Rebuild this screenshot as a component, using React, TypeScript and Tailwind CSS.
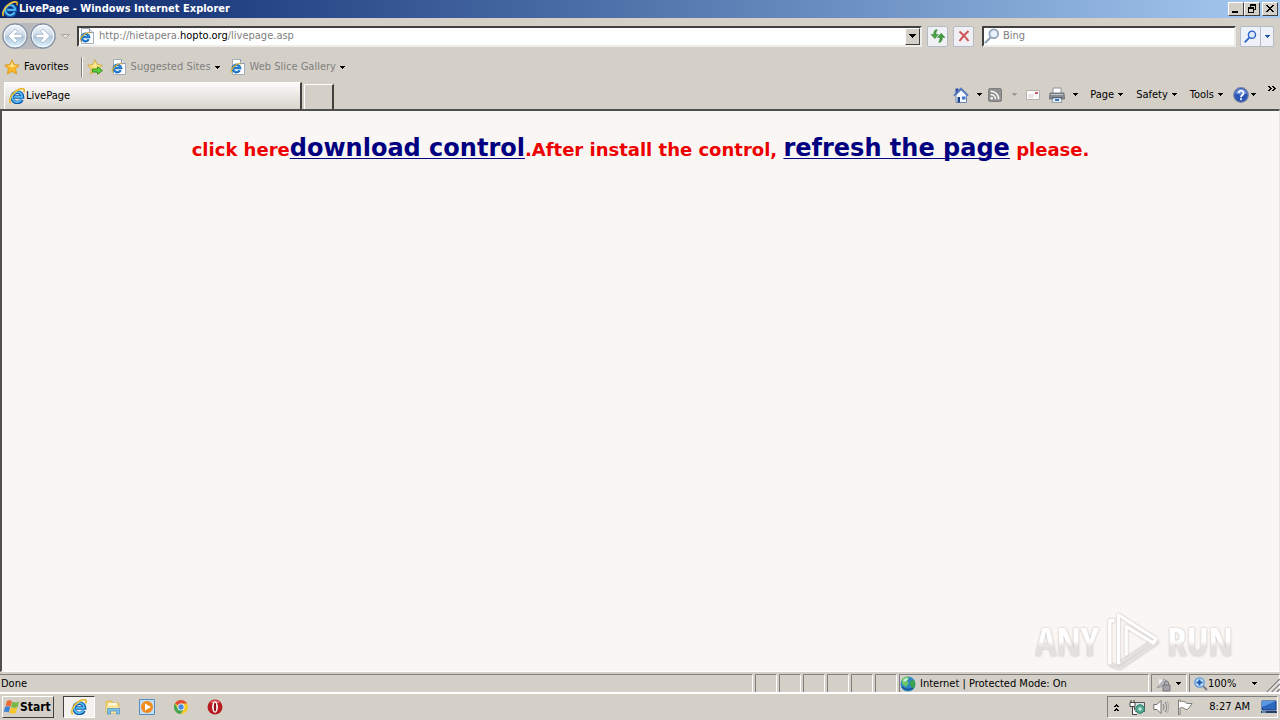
import React from "react";

const ui = "font-['Tahoma','DejaVu_Sans_Condensed','DejaVu_Sans',sans-serif]";

function Caret({ className = "text-black" }: { className?: string }) {
  return (
    <svg className={`h-[3px] w-[5px] shrink-0 ${className}`} viewBox="0 0 5 3" shapeRendering="crispEdges">
      <path d="M0 0h5v1H0zM1 1h3v1H1zM2 2h1v1H2z" fill="currentColor" />
    </svg>
  );
}

function IeGlyph({ className }: { className: string }) {
  return (
    <svg className={`shrink-0 ${className}`} viewBox="0 0 16 16" fill="none">
      <path d="M13 11.600A5.200 5.200 0 1 1 13.500 9H5.200" stroke="#1659ad" strokeWidth="3.600" />
      <path d="M12.700 11.200A5 5 0 1 1 13.200 8.900H5.200" stroke="#55c0f5" strokeWidth="1.700" />
      <path d="M1.700 15.200C-.6 13 1.600 7.400 6 3.800 10 .6 14.600-.2 15.200 1.900c.2.800 0 1.600-.4 2.400" stroke="#e3ae1c" strokeWidth="1.600" />
      <path d="M1.200 14C.3 12 2.400 7.400 6.300 4.200 10 1.300 14 .5 14.700 2" stroke="#fbe27a" strokeWidth=".7" />
    </svg>
  );
}

function PageIe() {
  return (
    <svg className="size-4 shrink-0" viewBox="0 0 16 16" fill="none">
      <path d="M2.500.5h8l4 4v11h-12z" fill="#fff" stroke="#a3adba" />
      <path d="M10.500.5v4h4" fill="#dfe6ee" stroke="#8c98a8" />
      <path d="M9.700 11.200A3.700 3.700 0 1 1 10.100 9H4" stroke="#1668c0" strokeWidth="2.400" />
      <path d="M9.300 10.900A3.500 3.500 0 1 1 9.800 8.900H4.400" stroke="#43a5e8" strokeWidth=".7" />
      <path d="M1.500 13.500c-1.200-1.700 1.200-5.400 4.300-7.500C8.400 4.300 11 3.900 11 5.500" stroke="#dcb02a" strokeWidth="1.100" />
    </svg>
  );
}

function NavArrow({ label, flip }: { label: string; flip?: boolean }) {
  return (
    <button aria-label={label} className="size-[26px]">
      <svg className="size-[26px]" viewBox="0 0 26 26">
        <defs>
          <linearGradient id={flip ? "ringB" : "ringA"} x1="0" y1="0" x2="0" y2="1">
            <stop offset="0" stopColor="#f4f7fb" />
            <stop offset=".48" stopColor="#ccd9e8" />
            <stop offset=".52" stopColor="#aec5db" />
            <stop offset="1" stopColor="#e2f6ff" />
          </linearGradient>
        </defs>
        <circle cx="13" cy="13" r="12" fill={flip ? "url(#ringB)" : "url(#ringA)"} stroke="#8492a6" strokeWidth="1.300" />
        <circle cx="13" cy="13" r="10.800" fill="none" stroke="#fff" strokeWidth="1" />
        <path
          d={flip ? "M6 11.300h7.500L10.500 8.200 13 6l7 7-7 7-2.500-2.200 3-3.100H6z" : "M20 11.300h-7.500l3-3.100L13 6l-7 7 7 7 2.500-2.200-3-3.100H20z"}
          fill="#fff"
          stroke="#a0b3c9"
          strokeWidth=".8"
        />
      </svg>
    </button>
  );
}

function Star({ add }: { add?: boolean }) {
  return (
    <svg className="size-4 shrink-0" viewBox="0 0 16 16">
      <path d="M8 .8l2.200 4.800 5.200.6-3.800 3.500 1 5.300L8 12.400 3.400 15l1-5.300L.6 6.200l5.200-.6z" fill={add ? "#f7dc6a" : "#fbb829"} stroke={add ? "#c9a53a" : "#d8921c"} strokeWidth=".8" />
      <path d="M8 2.800l1.500 3.500 3.500.4-4.600 1.500-5-1.500 3.200-.4z" fill="#fde79a" />
      {add && <path d="M5.500 10h5V7.800l5 3.700-5 3.700V13h-5z" fill="#5fce3e" stroke="#23871a" strokeWidth=".8" />}
    </svg>
  );
}

function Magnifier({ className, rim, glass }: { className: string; rim: string; glass: string }) {
  return (
    <svg className={`shrink-0 ${className}`} viewBox="0 0 16 16">
      <path d="M1.500 14.500L6.500 9.500" stroke={rim} strokeWidth="2.200" strokeLinecap="round" />
      <circle cx="9.800" cy="5.800" r="4.400" fill={glass} stroke={rim} strokeWidth="1.700" />
    </svg>
  );
}

function WinButton({ label, children }: { label: string; children: React.ReactNode }) {
  return (
    <button aria-label={label} className="h-[14px] w-4 border border-t-white border-r-[#404040] border-b-[#404040] border-l-white bg-[#d4d0c8]">
      <svg className="h-3 w-[14px]" viewBox="0 0 14 12" shapeRendering="crispEdges">
        {children}
      </svg>
    </button>
  );
}

function TitleBar() {
  return (
    <header className="flex h-[18px] items-center bg-linear-to-r from-[#0a246a] to-[#a6caf0] px-[2px] text-white">
      <IeGlyph className="mr-[1px] size-4" />
      <h1 className="grow text-[11px] font-bold">LivePage - Windows Internet Explorer</h1>
      <div className="mr-[2px] flex">
        <WinButton label="Minimize"><path d="M3 8h6v2H3z" /></WinButton>
        <WinButton label="Restore">
          <path d="M5 1h6v2H5zM5 3h1v1H5zM10 3h1v4h-1zM9 6h1v1H9zM3 4h6v2H3zM3 6h1v4H3zM8 6h1v4H8zM3 9h6v1H3z" />
        </WinButton>
      </div>
      <WinButton label="Close">
        <path d="M3 2h2v1H3zM9 2h2v1H9zM4 3h2v1H4zM8 3h2v1H8zM5 4h4v1H5zM6 5h2v1H6zM5 6h4v1H5zM4 7h2v1H4zM8 7h2v1H8zM3 8h2v1H3zM9 8h2v1H9z" />
      </WinButton>
    </header>
  );
}

function NavBar() {
  return (
    <div className="flex h-9 items-center pr-[6px] pl-[2px]">
      <nav aria-label="History" className="flex items-center gap-[2px] rounded-full bg-[#b9b9bd]">
        <NavArrow label="Back" />
        <NavArrow label="Forward" flip />
      </nav>
      <svg className="mr-[7px] ml-[5px] h-[5px] w-[9px]" viewBox="0 0 9 5"><path d="M.5.5h8l-4 4z" fill="#e6e3de" stroke="#aaa59c" /></svg>
      <div className="flex h-[21px] grow items-center border-2 border-t-[#404040] border-r-[#eeece8] border-b-[#eeece8] border-l-[#404040] bg-white">
        <PageIe />
        <a href="#address" aria-label="Address" className="ml-1 grow text-[11px] text-[#808080]">
          http://hietapera.<span className="text-black">hopto.org</span>/livepage.asp
        </a>
        <button aria-label="Show addresses" className="flex h-[17px] w-[15px] items-center justify-center border border-t-white border-r-[#404040] border-b-[#404040] border-l-white bg-[#d4d0c8]">
          <svg className="h-1 w-[7px]" viewBox="0 0 7 4" shapeRendering="crispEdges"><path d="M0 0h7v1H0zM1 1h5v1H1zM2 2h3v1H2zM3 3h1v1H3z" /></svg>
        </button>
      </div>
      <button aria-label="Refresh" className="ml-[5px] flex h-[21px] w-[21px] items-center justify-center rounded-[2px] border border-[#b4bac6] bg-[#f0f1f5]">
        <svg className="size-4" viewBox="0 0 16 16">
          <path d="M6.500 1.500C4.500 2 3.600 3.500 3.600 6.500H1l3.800 4.200L8.500 6.500H6c0-2 .2-3.500 1.500-4.500z" fill="#4aa546" stroke="#22701f" strokeWidth=".4" />
          <path d="M9 14.500c2.500-.5 3.400-2 3.400-5H15l-3.800-4.200L7.500 9.500H10c0 2-.2 3.500-1.500 4.500z" fill="#3f9a3c" stroke="#22701f" strokeWidth=".4" />
        </svg>
      </button>
      <button aria-label="Stop" className="ml-[5px] flex h-[21px] w-[21px] items-center justify-center rounded-[2px] border border-[#b4bac6] bg-[#f0eff3]">
        <svg className="size-3" viewBox="0 0 12 12"><path d="M1.500 1.500C4 3.500 8 7.500 10.500 11M10.500 1C7 4 4 7.500 1.500 11" stroke="#cf5257" strokeWidth="2.100" fill="none" /></svg>
      </button>
      <label className="ml-2 flex h-[21px] w-[254px] items-center border-2 border-t-[#404040] border-r-[#eeece8] border-b-[#eeece8] border-l-[#404040] bg-white">
        <Magnifier className="size-4" rim="#8fa3b8" glass="#e8f1f8" />
        <input aria-label="Search" placeholder="Bing" className="ml-[3px] min-w-0 grow text-[11px] placeholder:text-[#808080] focus:outline-none" />
      </label>
      <div className="ml-1 flex h-[21px] rounded-[2px] border border-[#b4bac6] bg-[#eef1f7]">
        <button aria-label="Search the web" className="flex w-5 items-center justify-center border-r border-[#b4bac6]">
          <Magnifier className="size-[13px]" rim="#2a62c8" glass="#dcebfb" />
        </button>
        <button aria-label="Search options" className="flex w-3 items-center justify-center"><Caret className="text-[#1f57a8]" /></button>
      </div>
    </div>
  );
}

function FavoritesBar() {
  return (
    <div className="flex h-7 items-center pb-[2px] pl-1 text-[11px]">
      <button className="flex items-center gap-1"><Star />Favorites</button>
      <span className="ml-3 h-5 w-[2px] border-r border-l border-r-white border-l-[#808080]" />
      <button aria-label="Add to Favorites Bar" className="ml-1"><Star add /></button>
      <button className="ml-2 flex items-center text-[#808080]">
        <PageIe /><span className="mr-1 ml-1">Suggested Sites</span><Caret />
      </button>
      <button className="ml-[10px] flex items-center text-[#808080]">
        <PageIe /><span className="mr-1 ml-1">Web Slice Gallery</span><Caret />
      </button>
    </div>
  );
}

function MenuButton({ text }: { text: string }) {
  return <button className="flex items-center gap-1">{text}<Caret /></button>;
}

function TabRow() {
  return (
    <div className="flex h-[27px] items-stretch pl-1 text-[11px]">
      <div className="flex w-[298px] items-center gap-[1px] border-t border-r-2 border-l border-t-white border-r-[#404040] border-l-white bg-linear-to-b from-[#fbfaf9] to-[#d9d5ce] pl-1">
        <IeGlyph className="size-4" /><span>LivePage</span>
      </div>
      <button aria-label="New Tab" className="mt-[2px] ml-[2px] w-[30px] border-t border-r-2 border-l border-t-white border-r-[#404040] border-l-white" />
      <span className="grow" />
      <div className="flex h-[25px] items-center pr-1">
        <button aria-label="Home" className="flex items-center gap-2">
          <svg className="size-4" viewBox="0 0 16 16">
            <path d="M2.500 1.500h3v5h-3z" fill="#28479c" />
            <path d="M3 8l5-5 5.500 5v7.500H3z" fill="#f5f9ff" stroke="#6d87b5" />
            <path d="M.8 8.700L8 1.500l7.200 7.200" fill="none" stroke="#587bc0" strokeWidth="1.700" />
            <path d="M4.500 10H7v5.500H4.500z" fill="#1d438c" /><path d="M9 9.500h3.500v3H9z" fill="#3d78d0" />
          </svg><Caret />
        </button>
        <button aria-label="Feeds" className="ml-[6px] flex items-center gap-[10px]">
          <svg className="size-[14px]" viewBox="0 0 15 15">
            <rect x=".5" y=".5" width="14" height="14" rx="2" fill="#929292" stroke="#777" />
            <g fill="none" stroke="#fff" strokeWidth="1.600"><path d="M3 3.500a8.500 8.500 0 0 1 8.500 8.500M3 7a5 5 0 0 1 5 5" /></g>
            <circle cx="4" cy="11" r="1.300" fill="#fff" />
          </svg><Caret className="text-[#a09c94]" />
        </button>
        <button aria-label="Read Mail" className="ml-[9px]">
          <svg className="h-[10px] w-[14px]" viewBox="0 0 14 10"><path d="M.5.5h13v9H.5z" fill="#fafafa" stroke="#b6b3b0" /><path d="M9 2h3v2H9z" fill="#cf5a62" /><path d="M2 5h6M2 7h5" stroke="#d5d3d0" /></svg>
        </button>
        <button aria-label="Print" className="ml-[9px] flex items-center gap-2">
          <svg className="size-4" viewBox="0 0 16 16">
            <path d="M4 1h8v6H4z" fill="#fff" stroke="#8d929b" /><path d="M1 6h14l.5 6H.5z" fill="#888d95" stroke="#5f646c" strokeWidth=".8" />
            <path d="M2 7h12v1H2z" fill="#c5c8cd" /><path d="M3 10h10v2H3z" fill="#4c5158" /><path d="M4 11h8l1 4.500H3z" fill="#e8f2fb" stroke="#7b8794" strokeWidth=".7" /><path d="M6 12h4v2H6z" fill="#3978bf" />
          </svg><Caret />
        </button>
        <div className="ml-3 flex gap-[13px]"><MenuButton text="Page" /><MenuButton text="Safety" /><MenuButton text="Tools" /></div>
        <button aria-label="Help" className="ml-[10px] flex items-center gap-[2px]">
          <svg className="size-4" viewBox="0 0 16 16">
            <circle cx="8" cy="8" r="7.300" fill="#2b55b5" stroke="#7685a6" strokeWidth="1.200" /><path d="M2.200 6.500a6 6 0 0 1 11.600 0c-3 1.200-8 1.200-11.600 0z" fill="#6d92df" />
            <path d="M5.700 6a2.400 2.400 0 1 1 3.600 2.100C8.200 8.700 8 9 8 10.200M8 11.200v1.900" fill="none" stroke="#fff" strokeWidth="1.800" />
          </svg><Caret />
        </button>
        <button aria-label="More" className="mb-3 ml-3">
          <svg className="h-[5px] w-2" viewBox="0 0 8 5" shapeRendering="crispEdges"><path d="M0 0h2v1H0zM1 1h2v1H1zM2 2h2v1H2zM1 3h2v1H1zM0 4h2v1H0zM4 0h2v1H4zM5 1h2v1H5zM6 2h2v1H6zM5 3h2v1H5zM4 4h2v1H4z" /></svg>
        </button>
      </div>
    </div>
  );
}

const markText = "bg-linear-to-b from-white from-50% to-[#e4e0de] to-60% bg-clip-text text-transparent";

function Watermark() {
  return (
    <div className="absolute right-[46px] bottom-0 flex items-center font-['Open_Sans_Condensed','Roboto_Condensed','Liberation_Sans_Narrow',sans-serif] text-[39px] leading-[60px] font-light drop-shadow-[0_0_1px_#bdb8b8]">
      <span className={markText}>ANY</span>
      <svg className="mx-[6px] h-[60px] w-[56px]" viewBox="0 0 58 60" fill="none" strokeLinejoin="round">
        <path d="M5 54l10 4 40-27M14 54l39-26" stroke="#e4e0de" strokeWidth="3.500" />
        <path d="M10 9H5v45" stroke="#fff" strokeWidth="3.500" />
        <path d="M14 54V3l39 25-3 4-28-17v30" stroke="#fff" strokeWidth="3.200" />
      </svg>
      <span className={markText}>RUN</span>
    </div>
  );
}

const link = "text-[24px] text-[#000080] underline decoration-1 underline-offset-2 [text-decoration-skip-ink:none]";
const pane = "border-t border-r border-l border-t-[#808080] border-r-white border-l-[#808080]";

function StatusBar() {
  return (
    <footer className="flex h-[19px] items-stretch gap-[2px] border-b border-white text-[11px]">
      <div className="flex grow items-center border-t border-r border-t-[#808080] border-r-white pl-[1px]">Done</div>
      {[0, 1, 2, 3, 4, 5].map((n) => <div key={n} className={`w-[22px] ${pane}`} />)}
      <div className={`flex w-[250px] items-center gap-1 ${pane}`}>
        <svg className="size-4" viewBox="0 0 16 16">
          <circle cx="8" cy="8" r="7.500" fill="#2e86c4" /><path d="M2 3c3-3 7-2.500 7-1L7 5l2 2-3 4-4-3z" fill="#6cc864" /><path d="M10 5l4-1c2 3 1 7-1 9l-3-4z" fill="#3ba34b" /><path d="M3 5c2-4 5-3 5-2S5 7 3 5z" fill="#c3eadb" /><path d="M2 11c3 3 8 3 11 1" stroke="#174c92" strokeWidth="1.500" fill="none" />
        </svg>
        Internet | Protected Mode: On
      </div>
      <button aria-label="Privacy report" className={`flex w-9 items-center gap-1 pl-1 ${pane}`}>
        <svg className="size-4" viewBox="0 0 16 16"><path d="M1 12L8 3l3 2v4z" fill="#b5b5b8" stroke="#8d8d92" strokeWidth=".6" /><path d="M7 9h7v6H7z" fill="#a3a3a6" stroke="#77777c" /><path d="M8.500 9V7a2 2 0 0 1 4 0v2" fill="none" stroke="#77777c" /><path d="M3 3l4 1-4 5z" fill="#f1f1f1" /></svg>
        <Caret />
      </button>
      <button className={`flex w-[91px] items-center pl-1 ${pane}`}>
        <svg className="size-[14px]" viewBox="0 0 14 14"><path d="M9 9l4 4" stroke="#777c88" strokeWidth="2" /><circle cx="5.500" cy="5.500" r="4.700" fill="#cfe6fb" stroke="#5b94d4" strokeWidth="1.300" /><path d="M5.500 2.500v6M2.500 5.500h6" stroke="#1b59b2" strokeWidth="2" /></svg>
        <span className="grow text-left">100%</span><Caret />
        <span className="w-[22px]" />
      </button>
      <svg className="-ml-4 h-[14px] w-[14px] self-end" viewBox="0 0 14 14"><path d="M1 14L14 1M6 14l8-8M11 14l3-3" stroke="#808080" strokeWidth="1.400" /><path d="M2.500 14L14 2.500M7.500 14L14 7.500" stroke="#fff" /></svg>
    </footer>
  );
}

function Taskbar() {
  return (
    <nav aria-label="Taskbar" className="flex items-center border-t border-white px-[2px] py-[2px] text-[11px]">
      <button className="flex h-[22px] w-[52px] items-center border border-t-white border-r-[#404040] border-b-[#404040] border-l-white font-bold">
        <svg className="h-4 w-[17px] shrink-0" viewBox="0 0 17 16">
          <path d="M4 2c2-1 3-1 5 .3L7.500 7.800C5.500 6.600 4 6.700 2.500 7.300z" fill="#ee6932" /><path d="M9.500 2.700c2 1 4 1 6.500 0L14.500 8.200c-2 .9-4 .9-6.500-.2z" fill="#78b843" />
          <path d="M2.200 7.800c2-.8 3.500-.8 5 .3L5.700 13.500C4 12.500 2.500 12.500.7 13z" fill="#3e82d4" /><path d="M7.700 8.500c2 1 4 1 6.500 0L12.700 14c-2 .9-4 .9-6.500-.2z" fill="#f7c52c" />
        </svg><span className="text-[12px]">Start</span>
      </button>
      <button aria-label="Internet Explorer" className="ml-[9px] flex h-[22px] w-8 items-center justify-center border border-t-[#404040] border-r-white border-b-white border-l-[#404040] bg-[#f3f2ef]"><IeGlyph className="size-4" /></button>
      <div className="ml-[10px] flex gap-[18px]">
        <button aria-label="Explorer">
          <svg className="size-4" viewBox="0 0 16 16"><path d="M1 2h6l1 2h6v10H1z" fill="#f0ce6c" stroke="#d8b860" strokeWidth=".8" /><path d="M3 4h9v4H3z" fill="#fdf7d8" /><path d="M1.500 6.500h12V14h-12z" fill="#f9e394" /><path d="M2.500 15V9.500h12V15h-3v-3h-6v3z" fill="#7cc0ea" stroke="#4b8fc0" strokeWidth=".7" /></svg>
        </button>
        <button aria-label="Media Player">
          <svg className="size-4" viewBox="0 0 16 16"><path d="M.5.5h15v15H.5z" fill="#c5dff2" stroke="#538ec5" /><circle cx="8" cy="8" r="6" fill="#f18b1d" /><path d="M6 4.500v7L12 8z" fill="#fff" /></svg>
        </button>
        <button aria-label="Chrome">
          <svg className="size-4" viewBox="0 0 16 16"><circle cx="8" cy="8" r="7" fill="#f5c829" /><path d="M8 8L1.900 4.500A7 7 0 0 1 14.100 4.500H8z" fill="#e04a3a" /><path d="M1.900 4.500A7 7 0 0 0 7.500 15L11 9.800 8 8 5 9.800z" fill="#45a455" /><circle cx="8" cy="8" r="3.500" fill="#fff" /><circle cx="8" cy="8" r="2.700" fill="#4a86e0" /></svg>
        </button>
        <button aria-label="Opera">
          <svg className="size-4" viewBox="0 0 16 16"><circle cx="8" cy="8" r="7.500" fill="#b81b22" /><path d="M3 4a6 6 0 0 1 10 0z" fill="#e36a6a" /><ellipse cx="8" cy="8" rx="2.900" ry="5.800" fill="#fff" /><ellipse cx="8" cy="8" rx="1.200" ry="4.600" fill="#8e1218" /></svg>
        </button>
      </div>
      <span className="grow" />
      <div className="flex h-[22px] items-center border border-t-[#808080] border-r-white border-b-white border-l-[#808080] pl-[6px]">
        <button aria-label="Show hidden icons"><svg className="h-[7px] w-[5px]" viewBox="0 0 5 7" shapeRendering="crispEdges"><path d="M2 0h1v1H2zM1 1h3v1H1zM0 2h2v1H0zM3 2h2v1H3zM2 4h1v1H2zM1 5h3v1H1zM0 6h2v1H0zM3 6h2v1H3z" /></svg></button>
        <svg className="ml-[10px] size-4" viewBox="0 0 16 16"><path d="M5.500 3.500h10v9h-10z" fill="#d9e5e5" stroke="#555" /><path d="M1 3.500h5v4H1zM2 1v2M5 1v2M3.500 7.500v8H8" fill="#fff" stroke="#444" /><circle cx="11" cy="10" r="4.300" fill="#54ab96" stroke="#2f7e6c" /><path d="M9 10l2-2 2 2-2 2z" fill="#c9efe0" /></svg>
        <svg className="ml-2 size-4" viewBox="0 0 16 16" fill="none"><path d="M.8 5.500H4l4-4v13l-4-4H.8z" fill="#fff" stroke="#707070" /><path d="M10 5c1.300 2 1.300 4 0 6M12 3c2.300 3 2.300 7 0 10" stroke="#777" /><path d="M14 2c2.300 4 2.300 8 0 12" stroke="#999" strokeWidth=".7" /></svg>
        <svg className="ml-2 size-4" viewBox="0 0 16 16"><path d="M1.500 1v14.500h1.500V9c2-1 4 0 5 1 1.500 1 3 .5 3.500-.5l3.500-5h-5C8 2 5 2 3 2.500V1z" fill="#fff" stroke="#707070" strokeWidth=".9" /></svg>
        <time className="ml-4">8:27 AM</time>
        <button aria-label="Show desktop" className="ml-[11px]"><svg className="h-[14px] w-4" viewBox="0 0 16 14"><path d="M1 1h14v9H1z" fill="#2c68be" stroke="#173d84" /><path d="M1 1h14L1 7z" fill="#5a9ae4" /><path d="M0 11h16v2H0z" fill="#243e6c" /><path d="M1 12h4" stroke="#9fd0f7" /></svg></button>
      </div>
    </nav>
  );
}

export default function App() {
  return (
    <div className={`flex min-h-screen flex-col bg-[#d4d0c8] leading-[14px] text-black ${ui}`}>
      <TitleBar />
      <NavBar />
      <FavoritesBar />
      <TabRow />
      <main className="relative grow border-t-2 border-r border-b border-l-2 border-t-[#505050] border-r-[#e8e5e0] border-b-white border-l-[#505050] bg-[#f9f6f3] pt-[22px]">
        <p className="text-center font-['Verdana','DejaVu_Sans',sans-serif] text-[18px] leading-[30px] font-bold text-[#ee0000]">
          click here<a href="#download" className={link}>download control</a>.After install the control,{" "}
          <a href="#refresh" className={link}>refresh the page</a> please.
        </p>
        <Watermark />
      </main>
      <div className="h-[2px]" />
      <StatusBar />
      <Taskbar />
    </div>
  );
}
